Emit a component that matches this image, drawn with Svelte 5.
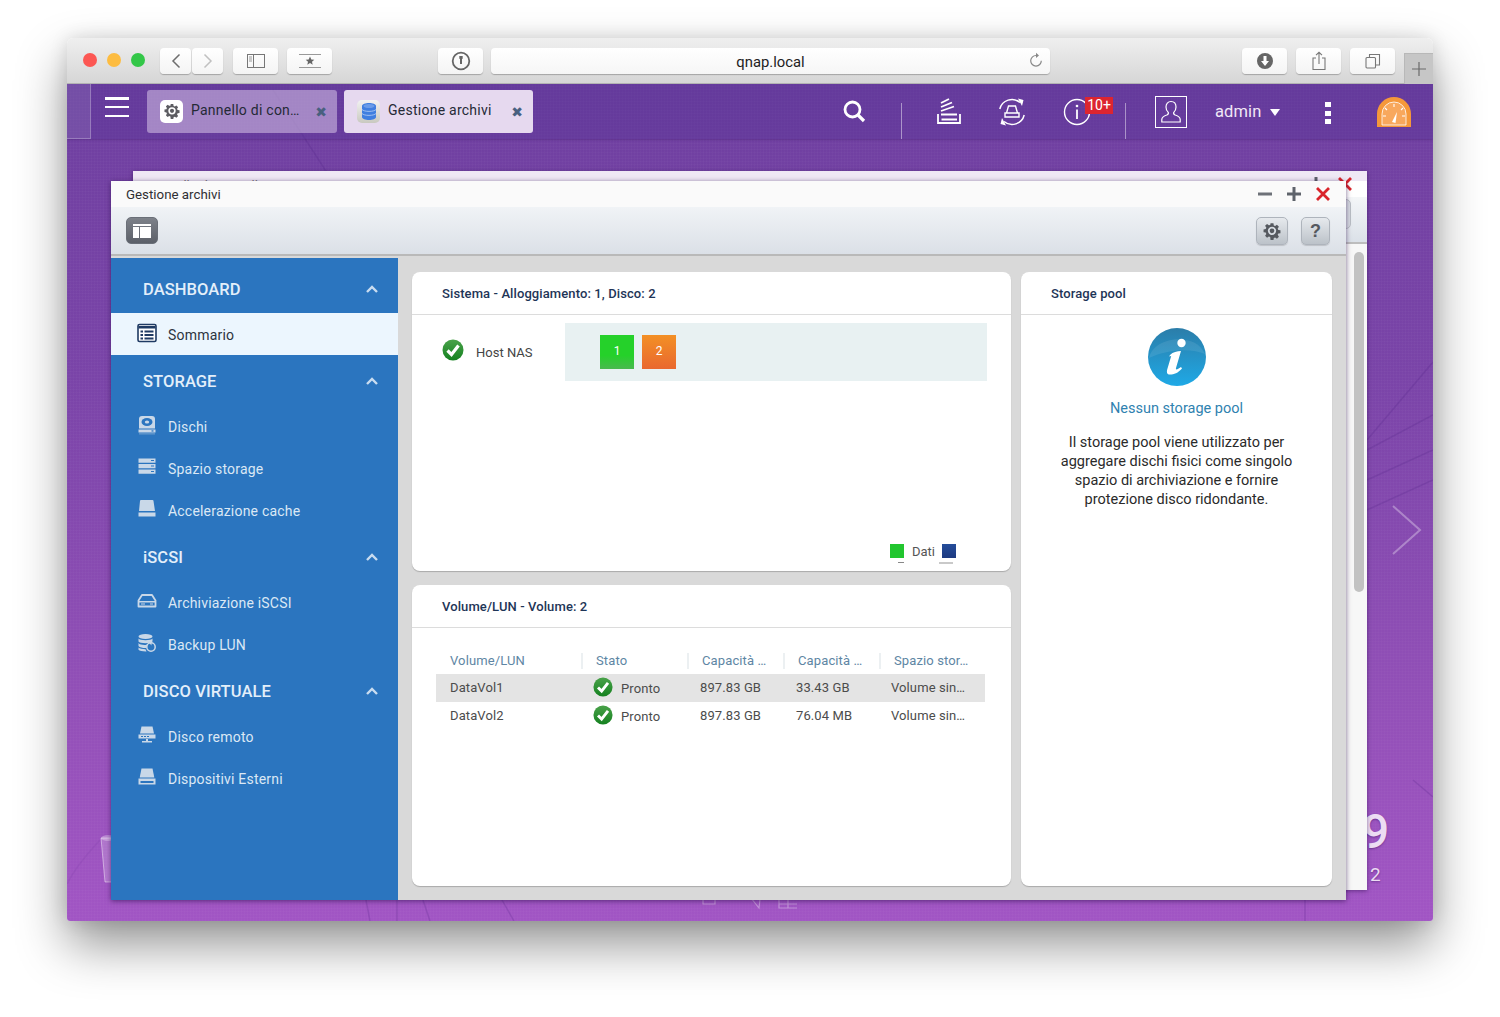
<script>
  const groups = [
    { title: 'DASHBOARD', h: 55, items: [{ label: 'Sommario', icon: 'sum', active: true }] },
    { title: 'STORAGE', h: 50, items: [{ label: 'Dischi', icon: 'disk' }, { label: 'Spazio storage', icon: 'stack' }, { label: 'Accelerazione cache', icon: 'cache' }] },
    { title: 'iSCSI', h: 50, items: [{ label: 'Archiviazione iSCSI', icon: 'iscsi' }, { label: 'Backup LUN', icon: 'lun' }] },
    { title: 'DISCO VIRTUALE', h: 50, items: [{ label: 'Disco remoto', icon: 'remote' }, { label: 'Dispositivi Esterni', icon: 'ext' }] }
  ];
  const rows = [
    { name: 'DataVol1', cap: '897.83 GB', used: '33.43 GB', sel: true },
    { name: 'DataVol2', cap: '897.83 GB', used: '76.04 MB', sel: false }
  ];
  const cols = ['Volume/LUN', 'Stato', 'Capacità …', 'Capacità …', 'Spazio stor…'];
</script>

{#snippet check(s)}
  <svg width={s} height={s} viewBox="0 0 22 22" class="chk">
    <defs><linearGradient id="cg" x1="0" y1="0" x2="0" y2="1"><stop offset="0" stop-color="#4aa24a"/><stop offset="1" stop-color="#14811f"/></linearGradient></defs>
    <circle cx="11" cy="11" r="10.5" fill="url(#cg)"/>
    <path d="M5.5 11.5 9.5 15.5 16.5 6.5" fill="none" stroke="#fff" stroke-width="3.2"/>
  </svg>
{/snippet}

{#snippet gear(s, c, hole)}
  <svg width={s} height={s} viewBox="0 0 20 20">
    <path d="M8.4 1h3.2l.4 2.4 1.5.7 2-1.4 2.2 2.2-1.4 2 .7 1.5 2.4.4v3.2l-2.4.4-.7 1.5 1.4 2-2.2 2.2-2-1.4-1.5.7-.4 2.4H8.4L8 16.400l-1.500-.7-2 1.400-2.200-2.200 1.400-2-.7-1.500L.6 11V7.800L3 7.400l.7-1.500-1.400-2 2.200-2.200 2 1.400L8 3z" fill={c} transform="translate(0 .4)"/>
    <circle cx="10" cy="9.8" r="4.6" fill={hole}/>
    <circle cx="10" cy="9.8" r="2.6" fill={c}/>
  </svg>
{/snippet}

{#snippet winControls()}
  <svg width="14" height="14" viewBox="0 0 14 14"><path d="M0 7h14" stroke="#6d7178" stroke-width="3"/></svg>
  <svg width="14" height="14" viewBox="0 0 14 14"><path d="M0 7h14M7 0v14" stroke="#5e636b" stroke-width="3"/></svg>
  <svg width="14" height="14" viewBox="0 0 14 14"><path d="M1 1l12 12M13 1 1 13" stroke="#d9242b" stroke-width="2.800"/></svg>
{/snippet}

{#snippet navIcon(k)}
  <svg width="20" height="20" viewBox="0 0 20 20" class="navicon">
    {#if k === 'sum'}
      <rect x="1" y="1.5" width="18" height="17" rx="1.5" fill="#fff" stroke="#1f3a63" stroke-width="1.6"/>
      <path d="M1.5 3h17v2.5h-17zM3.5 7.5h2.5v2H3.5zM7.5 7.5h9v2h-9zM3.5 11h2.5v2H3.500zM7.5 11h9v2h-9zM3.5 14.500h2.500v2H3.500zM7.500 14.500h9v2h-9z" fill="#1f3a63"/>
    {:else if k === 'disk'}
      <path d="M5 1h10a3 3 0 0 1 3 3v9.500H2V4a3 3 0 0 1 3-3z" fill="#c9d8e8"/>
      <ellipse cx="10" cy="7" rx="5.500" ry="4" fill="#2b75bf"/><ellipse cx="10" cy="7" rx="2.200" ry="1.500" fill="#c9d8e8"/>
      <path d="M1.500 14.500h17v3h-17z" fill="#c9d8e8"/><path d="M14.500 15.300h2v1.300h-2z" fill="#2b75bf"/><path d="M2 18.500h16v.8H2z" fill="#c9d8e8" opacity=".6"/>
    {:else if k === 'stack'}
      <path d="M1.500 1.500h17v4.200h-17zM1.500 7h17v4.200h-17zM1.500 12.500h17v4.200h-17z" fill="#c9d8e8"/>
      <path d="M14 3h3v1h-3zM14 8.500h3v1h-3zM14 14h3v1h-3z" fill="#2b75bf"/>
    {:else if k === 'cache'}
      <path d="M4 1h11.500a1 1 0 0 1 1 1l1.500 10H2L3 2a1 1 0 0 1 1-1z" fill="#c9d8e8"/>
      <path d="M1.500 13.500h17v4h-17z" fill="#c9d8e8"/>
    {:else if k === 'iscsi'}
      <path d="M5 4h10l3.500 5.500v6H1.500v-6z" fill="none" stroke="#c9d8e8" stroke-width="1.800" stroke-linejoin="round"/>
      <path d="M2 10h16v1.500H2z" fill="#c9d8e8"/><path d="M4 12.500h4v1H4zM13 12.500h3v1h-3z" fill="#c9d8e8"/>
    {:else if k === 'lun'}
      <ellipse cx="8.500" cy="3.500" rx="7" ry="2.500" fill="#c9d8e8"/>
      <path d="M1.500 5.500c1 2.200 13 2.200 14 0v3c-1 2.200-13 2.200-14 0zM1.500 10c1 2.200 8 2.200 9 1.500l-1 3.500c-3 .2-7-.5-8-2zM1.500 14.500c1 1.200 4 1.700 7 1.700l1 2.200c-3.500.1-7-.4-8-1.700z" fill="#c9d8e8"/>
      <circle cx="14" cy="14" r="4.200" fill="none" stroke="#c9d8e8" stroke-width="1.500"/><path d="M11 8.500l3.500 1v3z" fill="#c9d8e8"/>
    {:else if k === 'remote'}
      <path d="M4.500 1.500h11l1.500 7H3z" fill="#c9d8e8"/>
      <path d="M1.500 9.500h17v4h-17z" fill="#c9d8e8"/><path d="M4 11h2v1H4zM7 11h2v1H7zM10 11h2v1h-2z" fill="#2b75bf"/>
      <path d="M9 14h2v2h4v1.500H5V16h4z" fill="#c9d8e8"/>
    {:else}
      <path d="M4.500 1.500h11l1.800 9H2.700z" fill="#c9d8e8"/>
      <path d="M1.500 11.500h17v6h-17z" fill="#c9d8e8"/><path d="M3.500 14h13v2h-13z" fill="#2b75bf"/>
    {/if}
  </svg>
{/snippet}

<div class="page">
  <div class="mac">
    <header class="chrome">
      <div class="lights"><i class="r"></i><i class="y"></i><i class="g"></i></div>
      <div class="joined">
        <button class="sbtn w31"><svg width="10" height="16" viewBox="0 0 10 16"><path d="M8.500 1.500 2 8l6.500 6.500" fill="none" stroke="#6e6e6e" stroke-width="1.500"/></svg></button>
        <button class="sbtn w31"><svg width="10" height="16" viewBox="0 0 10 16"><path d="M1.500 1.500 8 8l-6.500 6.500" fill="none" stroke="#c0c0c0" stroke-width="1.500"/></svg></button>
      </div>
      <button class="sbtn w46 ml12"><svg width="18" height="14" viewBox="0 0 18 14"><rect x=".5" y=".5" width="17" height="13" fill="none" stroke="#777"/><path d="M6.500 0v14" stroke="#777"/><path d="M2 3h3M2 5h3M2 7h3" stroke="#999"/></svg></button>
      <button class="sbtn w46 ml8"><svg width="22" height="14" viewBox="0 0 22 14"><path d="M0 .500h22M0 13.500h22" stroke="#999"/><path d="M11 2.500l1.300 2.900 3 .3-2.300 2 .7 3-2.700-1.600-2.700 1.600.7-3-2.300-2 3-.3z" fill="#666"/></svg></button>
      <button class="sbtn w46 ml105"><svg width="20" height="20" viewBox="0 0 20 20"><circle cx="10" cy="10" r="8.300" fill="none" stroke="#666" stroke-width="1.800"/><path d="M8.300 5h3.400v2.600l-.7.600v4.800H9v-4.800l-.7-.6z" fill="#666"/></svg></button>
      <div class="url">
        <span>qnap.local</span>
        <svg class="reload" width="14" height="16" viewBox="0 0 14 16"><path d="M7 3.500a5.300 5.300 0 1 0 5.300 5.300" fill="none" stroke="#888" stroke-width="1.200"/><path d="M7 0.800 10 3.500 7 6z" fill="#888"/></svg>
      </div>
      <button class="sbtn w46 ml191"><svg width="18" height="18" viewBox="0 0 18 18"><circle cx="9" cy="9" r="8" fill="#666"/><path d="M7.500 4h3v5h2.500L9 14 5 9h2.500z" fill="#fff"/></svg></button>
      <button class="sbtn w46 ml8"><svg width="16" height="20" viewBox="0 0 16 20"><path d="M5 7H2v11.500h12V7h-3" fill="none" stroke="#777" stroke-width="1.100"/><path d="M8 13V1.500M5 4.200 8 1.300l3 2.900" fill="none" stroke="#777" stroke-width="1.100"/></svg></button>
      <button class="sbtn w46 ml8"><svg width="16" height="16" viewBox="0 0 16 16"><rect x="1" y="4.500" width="9.500" height="10.500" rx="1" fill="none" stroke="#777" stroke-width="1.100"/><path d="M4.500 4V1.500h10V12h-3.500" fill="none" stroke="#777" stroke-width="1.100"/></svg></button>
      <div class="newtab"><svg width="14" height="14" viewBox="0 0 14 14"><path d="M7 0v14M0 7h14" stroke="#6a6a6a" stroke-width="1.200"/></svg></div>
    </header>

    <div class="desktop">
      <svg class="wall" width="1366" height="837" viewBox="0 0 1366 837" fill="none" stroke="#4a1f80" stroke-opacity=".2" stroke-width="1.500">
        <path d="M206 6C225 35 245 65 262 92"/>
        <path d="M1366 278 1300 356M1366 331 1300 366M1366 366 1300 396M1366 396 1300 426"/>
        <path d="M0 800C10 780 25 765 33 756" stroke-opacity=".08"/>
        <path d="M299 816 303 837M330 816 330 837M356 816 363 837M435 816 447 837M1238 816 1238 837"/>
        <path d="M1346 696 1366 713"/>
      </svg>

      <nav class="qbar">
        <div class="tile"></div>
        <button class="burger" aria-label="Menu"><i></i><i></i><i></i></button>
        <div class="tab t1">
          <span class="tabicon white">{@render gear(16, '#5d5d62', '#fff')}</span>
          <span class="tabtxt">Pannello di con…</span>
          <span class="tabx">✖</span>
        </div>
        <div class="tab t2">
          <span class="tabicon db"><svg width="14" height="17" viewBox="0 0 14 17"><path d="M0 3c0-4 14-4 14 0v11c0 4-14 4-14 0z" fill="#3f7fe0"/><path d="M0 6.500c2 2.500 12 2.500 14 0M0 10.500c2 2.500 12 2.500 14 0" fill="none" stroke="#a9c7f2" stroke-width=".9"/><ellipse cx="7" cy="3" rx="5.500" ry="2" fill="#6a9ce8"/></svg></span>
          <span class="tabtxt">Gestione archivi</span>
          <span class="tabx">✖</span>
        </div>
        <div class="tools">
          <svg class="ti search" width="24" height="24" viewBox="0 0 24 24"><circle cx="10.500" cy="10.500" r="7.500" fill="none" stroke="#fff" stroke-width="2.800"/><path d="M16 16l6 6" stroke="#fff" stroke-width="3.200"/></svg>
          <i class="sep s1"></i>
          <svg class="ti stackic" width="26" height="28" viewBox="0 0 26 28" fill="none" stroke="#fff" stroke-width="1.800"><path d="M2 17v9h22v-9M5.500 22.500h15.500M5 17.500h16M5 14l13-4.500M5 10l11-4.500M5 6l8-4"/></svg>
          <svg class="ti syncic" width="30" height="30" viewBox="0 0 30 30" fill="none" stroke="#fff" stroke-width="1.500"><path d="M2.800 12A12.500 12.500 0 0 1 23 5.500M27.200 18A12.500 12.500 0 0 1 7 24.500"/><path d="M21 1.500l5.500 1.500-1.500 6zM9 28.500 3.500 27l1.500-6z" fill="#fff" stroke="none"/><path d="M11.500 9h7l2 7h-11zM8 16h14v4H8z" stroke-width="1.400"/></svg>
          <div class="info">
            <svg width="28" height="28" viewBox="0 0 28 28" fill="none"><circle cx="14" cy="14" r="12.500" stroke="#fff" stroke-width="1.400"/><path d="M14 11.500V21" stroke="#fff" stroke-width="1.800"/><circle cx="14" cy="8" r="1.300" fill="#fff"/></svg>
            <b>10+</b>
          </div>
          <i class="sep s2"></i>
          <div class="user"><svg width="22" height="26" viewBox="0 0 22 26" fill="none" stroke="#fff" stroke-width="1.200"><path d="M11 2.500c3.200 0 5 2.400 5 5.500 0 2.300-1 4.400-2.300 5.400-.4 1.300 0 2 1.500 2.600 3 1 5 2.200 5 4.500v2.500H1.800V20.500c0-2.300 2-3.500 5-4.500 1.500-.6 1.900-1.300 1.500-2.600C7 12.400 6 10.300 6 8c0-3.100 1.800-5.500 5-5.500z"/></svg></div>
          <span class="admin">admin</span>
          <svg class="caret" width="10" height="7" viewBox="0 0 10 7"><path d="M0 0h10L5 7z" fill="#fff"/></svg>
          <div class="dots"><i></i><i></i><i></i></div>
          <svg class="gauge" width="36" height="32" viewBox="0 0 36 32"><path d="M1 31v-13a17 17 0 0 1 34 0v13z" fill="#f5983a"/><path d="M6 29v-11a12 12 0 0 1 24 0v11z" fill="#f9b77a" stroke="#fff" stroke-width=".8" fill-opacity=".55"/><path d="M16 26l5-10 -1.500 11z" fill="#fff"/><path d="M18 8v3M9 12l2 2M27 12l-2 2M7 20h3M26 20h3" stroke="#fff" stroke-width="1.100"/></svg>
        </div>
      </nav>

      <svg class="trash" width="16" height="50" viewBox="0 0 16 50"><path d="M1 4 5 48h11V4z" fill="#fff" fill-opacity=".2" stroke="#fff" stroke-opacity=".45"/><ellipse cx="8" cy="4" rx="7" ry="3" fill="#fff" fill-opacity=".3"/></svg>
      <svg class="bottomicons" width="110" height="16" viewBox="0 0 110 16" fill="none" stroke="#d6b9e4" stroke-opacity=".6" stroke-width="1.200"><path d="M12 2v6h12V2M60 2l8 10 1-9M88 2v10h18M88 8h18M97 2v10"/></svg>
      <div class="clock big">9</div>
      <div class="clock small">2</div>
      <svg class="next" width="32" height="52" viewBox="0 0 32 52"><path d="M2 2 29 26 2 50" fill="none" stroke="#fff" stroke-opacity=".32" stroke-width="2"/></svg>

      <section class="win back">
        <div class="backtitle">
          <span>Pannello di controllo</span>
          <div class="backctl">{@render winControls()}</div>
        </div>
        <div class="backtool"><i class="backbtn"></i></div>
        <div class="backbody"><div class="scroll"></div></div>
      </section>

      <section class="win front">
        <div class="titlebar">
          <span>Gestione archivi</span>
          <div class="winctl">{@render winControls()}</div>
        </div>
        <div class="toolbar">
          <button class="toggle" aria-label="Pannello"><svg width="18" height="14" viewBox="0 0 18 14"><path d="M0 0h18v2H0zM0 3h6v11H0zM7 3h11v11H7z" fill="#fff"/></svg></button>
          <div class="tright">
            <button class="tbtn">{@render gear(18, '#55595f', '#d7dce2')}</button>
            <button class="tbtn q">?</button>
          </div>
        </div>
        <div class="body">
          <aside class="side">
            {#each groups as g}
              <div class="ghead" style:height="{g.h}px">
                <span>{g.title}</span>
                <svg width="12" height="8" viewBox="0 0 12 8"><path d="M1 7 6 2l5 5" fill="none" stroke="#c9dcf0" stroke-width="2.400"/></svg>
              </div>
              {#each g.items as it}
                <div class="item" class:active={it.active}>
                  {@render navIcon(it.icon)}
                  <span>{it.label}</span>
                </div>
              {/each}
            {/each}
          </aside>

          <div class="main">
            <div class="leftcol">
              <article class="card sys">
                <h3>Sistema - Alloggiamento: 1, Disco: 2</h3>
                <div class="hostrow">
                  <div class="hostlabel">{@render check(22)}<span>Host NAS</span></div>
                  <div class="bays">
                    <div class="bay green">1</div>
                    <div class="bay orange">2</div>
                  </div>
                </div>
                <div class="legend">
                  <div class="lg"><i class="lgreen"></i><u class="ug"></u></div>
                  <span>Dati</span>
                  <div class="lg"><i class="lblue"></i><u class="ub"></u></div>
                </div>
              </article>
              <article class="card vol">
                <h3>Volume/LUN - Volume: 2</h3>
                <div class="tablewrap">
                  <div class="thead">
                    {#each cols as c}<span>{c}</span>{/each}
                  </div>
                  {#each rows as r}
                    <div class="trow" class:sel={r.sel}>
                      <span>{r.name}</span>
                      <span class="st">{@render check(20)}<em>Pronto</em></span>
                      <span>{r.cap}</span>
                      <span>{r.used}</span>
                      <span>Volume sin…</span>
                    </div>
                  {/each}
                </div>
              </article>
            </div>
            <article class="card pool">
              <h3>Storage pool</h3>
              <div class="poolbody">
                <svg width="58" height="58" viewBox="0 0 58 58">
                  <defs>
                    <linearGradient id="ig" x1="0" y1="0" x2="0" y2="1"><stop offset="0" stop-color="#2b7da9"/><stop offset="1" stop-color="#1fa9e6"/></linearGradient>
                  </defs>
                  <circle cx="29" cy="29" r="29" fill="url(#ig)"/>
                  <path d="M1 30C6 8 48 4 57 26 44 20 20 21 1 30z" fill="#fff" fill-opacity=".09"/>
                  <circle cx="33.500" cy="15" r="4.200" fill="#fff"/>
                  <path d="M22 27c3-3 7-4 11-4l-5 17c-.5 2 1 2 5-1l1 1.500c-4 4.500-8 6-12 6-3 0-3.500-2-2.800-5l4-13.500-2 .5z" fill="#fff"/>
                </svg>
                <div class="none">Nessun storage pool</div>
                <p>Il storage pool viene utilizzato per aggregare dischi fisici come singolo spazio di archiviazione e fornire protezione disco ridondante.</p>
              </div>
            </article>
          </div>
        </div>
      </section>
    </div>
  </div>
</div>

<style>
  :global(body) { margin: 0; background: #fff; }
  * { box-sizing: border-box; }
  .page { width: 1500px; height: 1017px; padding: 38px 67px 0; font-family: Roboto, "Liberation Sans", sans-serif; overflow: hidden; background: #fff; }
  .mac { width: 1366px; height: 883px; border-radius: 6px 6px 3px 3px; overflow: hidden; display: flex; flex-direction: column; box-shadow: 0 24px 50px rgba(0,0,0,.42), 0 0 18px rgba(0,0,0,.12); }
  .chrome { height: 46px; flex: none; display: flex; align-items: flex-start; padding: 10px 0 0 16px; background: linear-gradient(#efefef, #d6d6d6); border-bottom: 1px solid #b3b3b3; position: relative; }
  .lights { display: flex; gap: 10px; margin-top: 5px; width: 77px; flex: none; }
  .lights i { width: 14px; height: 14px; border-radius: 50%; }
  .r { background: #fc5753; } .y { background: #fdbc40; } .g { background: #33c748; }
  .joined { display: flex; gap: 1px; }
  .sbtn { height: 26px; background: linear-gradient(#fff, #f4f4f4); border: 0; border-radius: 4px; box-shadow: 0 1px 1px rgba(0,0,0,.25); display: flex; align-items: center; justify-content: center; padding: 0; flex: none; }
  .w31 { width: 31px; } .w46 { width: 45px; }
  .ml12 { margin-left: 10px; } .ml8 { margin-left: 9px; } .ml105 { margin-left: 106px; } .ml191 { margin-left: 192px; }
  .url { width: 559px; height: 26px; margin-left: 8px; flex: none; background: linear-gradient(#fff, #f6f6f6); border-radius: 4px; box-shadow: 0 1px 1px rgba(0,0,0,.25); position: relative; display: flex; align-items: center; justify-content: center; font-size: 14.8px; color: #222; padding-top: 1px; }
  .reload { position: absolute; right: 7px; top: 4px; }
  .newtab { position: absolute; right: 0; top: 15px; width: 29px; height: 31px; background: #c6c6c6; border-left: 1px solid #b8b8b8; border-top: 1px solid #b8b8b8; display: flex; align-items: center; justify-content: center; }

  .desktop { position: relative; flex: 1; overflow: hidden; background:
    repeating-linear-gradient(0deg, rgba(255,255,255,.018) 0 1px, transparent 1px 3px),
    repeating-linear-gradient(90deg, rgba(255,255,255,.018) 0 1px, transparent 1px 3px),
    linear-gradient(#6e3fa0 0%, #7a44a8 35%, #9350b8 75%, #a155c4 100%); }
  .wall { position: absolute; left: 0; top: 0; }
  .qbar { height: 55px; display: flex; align-items: flex-start; position: relative; background: rgba(88,52,150,.4); box-shadow: 0 1px 2px rgba(60,20,100,.35); }
  .tile { position: absolute; left: 0; top: 0; width: 24px; height: 55px; background: rgba(255,255,255,.1); border-right: 1px solid rgba(255,255,255,.25); border-bottom: 1px solid rgba(255,255,255,.25); }
  .burger { position: absolute; left: 38px; top: 13px; width: 24px; height: 20px; padding: 0; border: 0; background: none; display: flex; flex-direction: column; justify-content: space-between; }
  .burger i { height: 2.500px; background: #fff; }
  .tab { position: absolute; top: 6px; height: 43px; border-radius: 3px; display: flex; align-items: center; padding-left: 13px; font-size: 14px; letter-spacing: .25px; color: #252a36; }
  .t1 { left: 80px; width: 190px; background: rgba(226,210,238,.5); }
  .t2 { left: 277px; width: 189px; background: #e6d9ef; }
  .tabicon { width: 23px; height: 23px; border-radius: 5px; display: flex; align-items: center; justify-content: center; flex: none; margin-right: 8px; margin-top: -1px; }
  .white { background: #fff; }
  .db { background: linear-gradient(#f2f2f2, #c9c9c0); }
  .tabtxt { white-space: nowrap; margin-top: -3px; }
  .tabx { position: absolute; right: 10px; top: 14px; font-size: 14px; line-height: 16px; letter-spacing: 0; color: #49607f; font-family: "DejaVu Sans", sans-serif; }

  .tools { position: absolute; inset: 0; pointer-events: none; }
  .ti { position: absolute; top: 14px; }
  .search { left: 775px; top: 15px; }
  .stackic { left: 869px; top: 13px; }
  .syncic { left: 930px; top: 13px; }
  .sep { position: absolute; top: 19px; width: 1px; height: 36px; background: rgba(255,255,255,.45); }
  .s1 { left: 834px; } .s2 { left: 1058px; }
  .info { position: absolute; left: 996px; top: 14px; width: 50px; height: 30px; }
  .info b { position: absolute; left: 22px; top: -1px; width: 28px; height: 17px; background: #dc2530; color: #fff; font-weight: 400; font-size: 14px; line-height: 16px; text-align: center; }
  .user { position: absolute; left: 1088px; top: 12px; width: 32px; height: 32px; border: 1px solid #fff; display: flex; align-items: center; justify-content: center; }
  .admin { position: absolute; left: 1148px; top: 18px; color: #f0e8f6; font-size: 16.5px; letter-spacing: .1px; line-height: 20px; }
  .caret { position: absolute; left: 1203px; top: 25px; }
  .dots { position: absolute; left: 1258px; top: 18px; width: 6px; height: 22px; display: flex; flex-direction: column; justify-content: space-between; }
  .dots i { height: 5px; background: #fff; }
  .gauge { position: absolute; left: 1309px; top: 12px; }

  .trash { position: absolute; left: 33px; top: 750px; }
  .bottomicons { position: absolute; left: 624px; top: 812px; }
  .clock { position: absolute; color: #ecdcf3; text-shadow: 0 1px 2px rgba(60,20,100,.5); font-family: Roboto, sans-serif; }
  .big { left: 1295px; top: 718px; font-size: 48px; line-height: 60px; font-weight: 500; }
  .small { left: 1303px; top: 778px; font-size: 19px; line-height: 26px; }
  .next { position: absolute; left: 1324px; top: 420px; }

  .win { position: absolute; display: flex; flex-direction: column; box-shadow: 0 1px 4px rgba(40,10,70,.5); }
  .back { left: 66px; top: 87px; width: 1234px; height: 719px; background: #f5f5f5; }
  .backtitle { height: 26px; background: linear-gradient(#efe8f5 10px, #fff 10px); display: flex; justify-content: space-between; padding: 0 15px 0 14px; align-items: center; font-size: 13px; color: #777; }
  .backtitle span { margin-top: 3px; }
  .backctl { display: flex; gap: 15px; align-items: center; }
  .backtool { height: 47px; background: linear-gradient(#f4f6f8, #dbe1e8); border-bottom: 2px solid #bdbdbd; position: relative; }
  .backbtn { position: absolute; right: 16px; top: 2px; width: 24px; height: 30px; background: #d7dce2; border: 1px solid #b9bec4; border-radius: 5px; }
  .backbody { flex: 1; position: relative; background: #f7f7f7; }
  .scroll { position: absolute; right: 3px; top: 8px; width: 10px; height: 340px; border-radius: 5px; background: #c2c2c2; }

  .front { left: 44px; top: 97px; width: 1235px; height: 719px; background: #d9d9d9; z-index: 2; box-shadow: 0 1px 5px rgba(40,10,70,.6); }
  .titlebar { height: 26px; flex: none; background: rgba(255,255,255,.86); display: flex; align-items: center; justify-content: space-between; padding: 0 16px 0 15px; font-size: 13.3px; color: #2f2f33; position: relative; }
  .winctl { display: flex; gap: 15px; align-items: center; }
  .toolbar { height: 47px; flex: none; background: linear-gradient(#f0f3f6, #dbe0e7); display: flex; align-items: flex-start; justify-content: space-between; padding: 10px 16px 0 15px; }
  .toggle { width: 32px; height: 27px; padding: 0; border: 1px solid #6a6f78; border-radius: 5px; background: linear-gradient(#7d8189, #5c6069); display: flex; align-items: center; justify-content: center; }
  .tright { display: flex; gap: 13px; }
  .tbtn { width: 32px; height: 28px; padding: 0; border: 1px solid #aeb4bc; border-radius: 5px; background: linear-gradient(#e6e9ed, #bcc2c9); box-shadow: 0 1px 1px rgba(0,0,0,.15); display: flex; align-items: center; justify-content: center; }
  .tbtn.q { width: 29px; color: #55595f; font: 700 18px "Liberation Sans", sans-serif; }
  .body { flex: 1; display: flex; border-top: 2px solid #b9b9b9; padding-top: 2px; min-height: 0; background: #d9d9d9; }
  .side { width: 287px; flex: none; background: #2b75bf; }
  .ghead { display: flex; align-items: center; justify-content: space-between; padding: 2px 20px 0 32px; font-size: 16.5px; letter-spacing: .08px; font-weight: 500; color: #e3effa; }
  .ghead:first-child { padding-top: 7px; }
  .item { height: 42px; display: flex; align-items: center; padding-left: 26px; gap: 11px; font-size: 14px; letter-spacing: .2px; color: #dbe8f5; }
  .item span { margin-top: 1px; }
  .item .navicon { margin-top: -2px; }
  .item.active { background: #ecf6fe; color: #2c3440; }
  .main { flex: 1; display: flex; gap: 10px; padding: 14px 13px 14px 14px; min-width: 0; }
  .leftcol { width: 599px; flex: none; display: flex; flex-direction: column; gap: 14px; }
  .card { background: #fff; border-radius: 8px; box-shadow: 0 1px 1px rgba(0,0,0,.22); position: relative; overflow: hidden; }
  .card h3 { margin: 0; height: 43px; border-bottom: 1px solid #dcdcdc; padding: 0 30px; font-size: 13px; letter-spacing: .1px; font-weight: 500; line-height: 43px; color: #1e3557; }
  .sys { height: 299px; }
  .vol { flex: 1; }
  .pool { width: 311px; flex: none; }
  .hostrow { display: flex; align-items: flex-start; margin-top: 8px; padding-left: 30px; }
  .hostlabel { width: 123px; display: flex; align-items: center; gap: 12px; height: 58px; font-size: 13px; color: #444; padding-bottom: 4px; }
  .hostlabel span { margin-top: 4px; }
  .bays { width: 422px; height: 58px; background: #e8f1f2; display: flex; gap: 8px; padding: 12px 0 0 35px; }
  .bay { width: 34px; height: 34px; display: flex; align-items: center; justify-content: center; color: #fff; font-size: 12px; padding-bottom: 3px; }
  .green { background: linear-gradient(#25d12a 60%, #49b94f); }
  .orange { background: linear-gradient(#f39025, #e9682f); }
  .legend { position: absolute; left: 478px; top: 272px; display: flex; align-items: flex-start; font-size: 13px; color: #555; }
  .legend span { margin: 0 7px; line-height: 15px; }
  .lg { width: 15px; height: 21px; position: relative; }
  .lg i { position: absolute; left: 0; top: 0; width: 14px; height: 14px; }
  .lgreen { background: #22c62f; }
  .lblue { background: linear-gradient(#254d9a, #1d3a80); }
  .lg u { position: absolute; top: 18px; height: 2px; }
  .ug { left: 8px; width: 6px; background: #888; height: 1px !important; }
  .ub { left: -3px; width: 14px; background: #c9c9c9; }
  .tablewrap { padding: 21px 26px 0 24px; }
  .thead, .trow { display: grid; grid-template-columns: 145px 106px 96px 96px 106px; }
  .thead { height: 25px; align-items: center; font-size: 13px; letter-spacing: .12px; color: #5e86a4; padding-bottom: 2px; }
  .thead span { padding-left: 13px; border-left: 2px solid #ecf0f2; line-height: 16px; white-space: nowrap; }
  .thead span:first-child { border-left: 0; padding-left: 14px; }
  .trow { height: 28px; align-items: center; font-size: 13px; letter-spacing: .1px; color: #4c4c4c; padding-bottom: 2px; }
  .trow.sel { background: #e4e4e4; }
  .trow span { padding-left: 13px; white-space: nowrap; }
  .trow span:first-child { padding-left: 14px; }
  .trow span:last-child { padding-left: 12px; }
  .trow .st { padding-left: 12px; display: flex; align-items: center; gap: 8px; }
  .trow em { font-style: normal; margin-top: 3px; }
  .poolbody { display: flex; flex-direction: column; align-items: center; padding-top: 13px; }
  .none { margin-top: 14px; font-size: 14.5px; color: #2f82b0; }
  .poolbody p { margin: 16px 0 0; width: 250px; text-align: center; font-size: 14.5px; line-height: 19px; color: #2a2a2a; }
  .chk { flex: none; }
</style>
